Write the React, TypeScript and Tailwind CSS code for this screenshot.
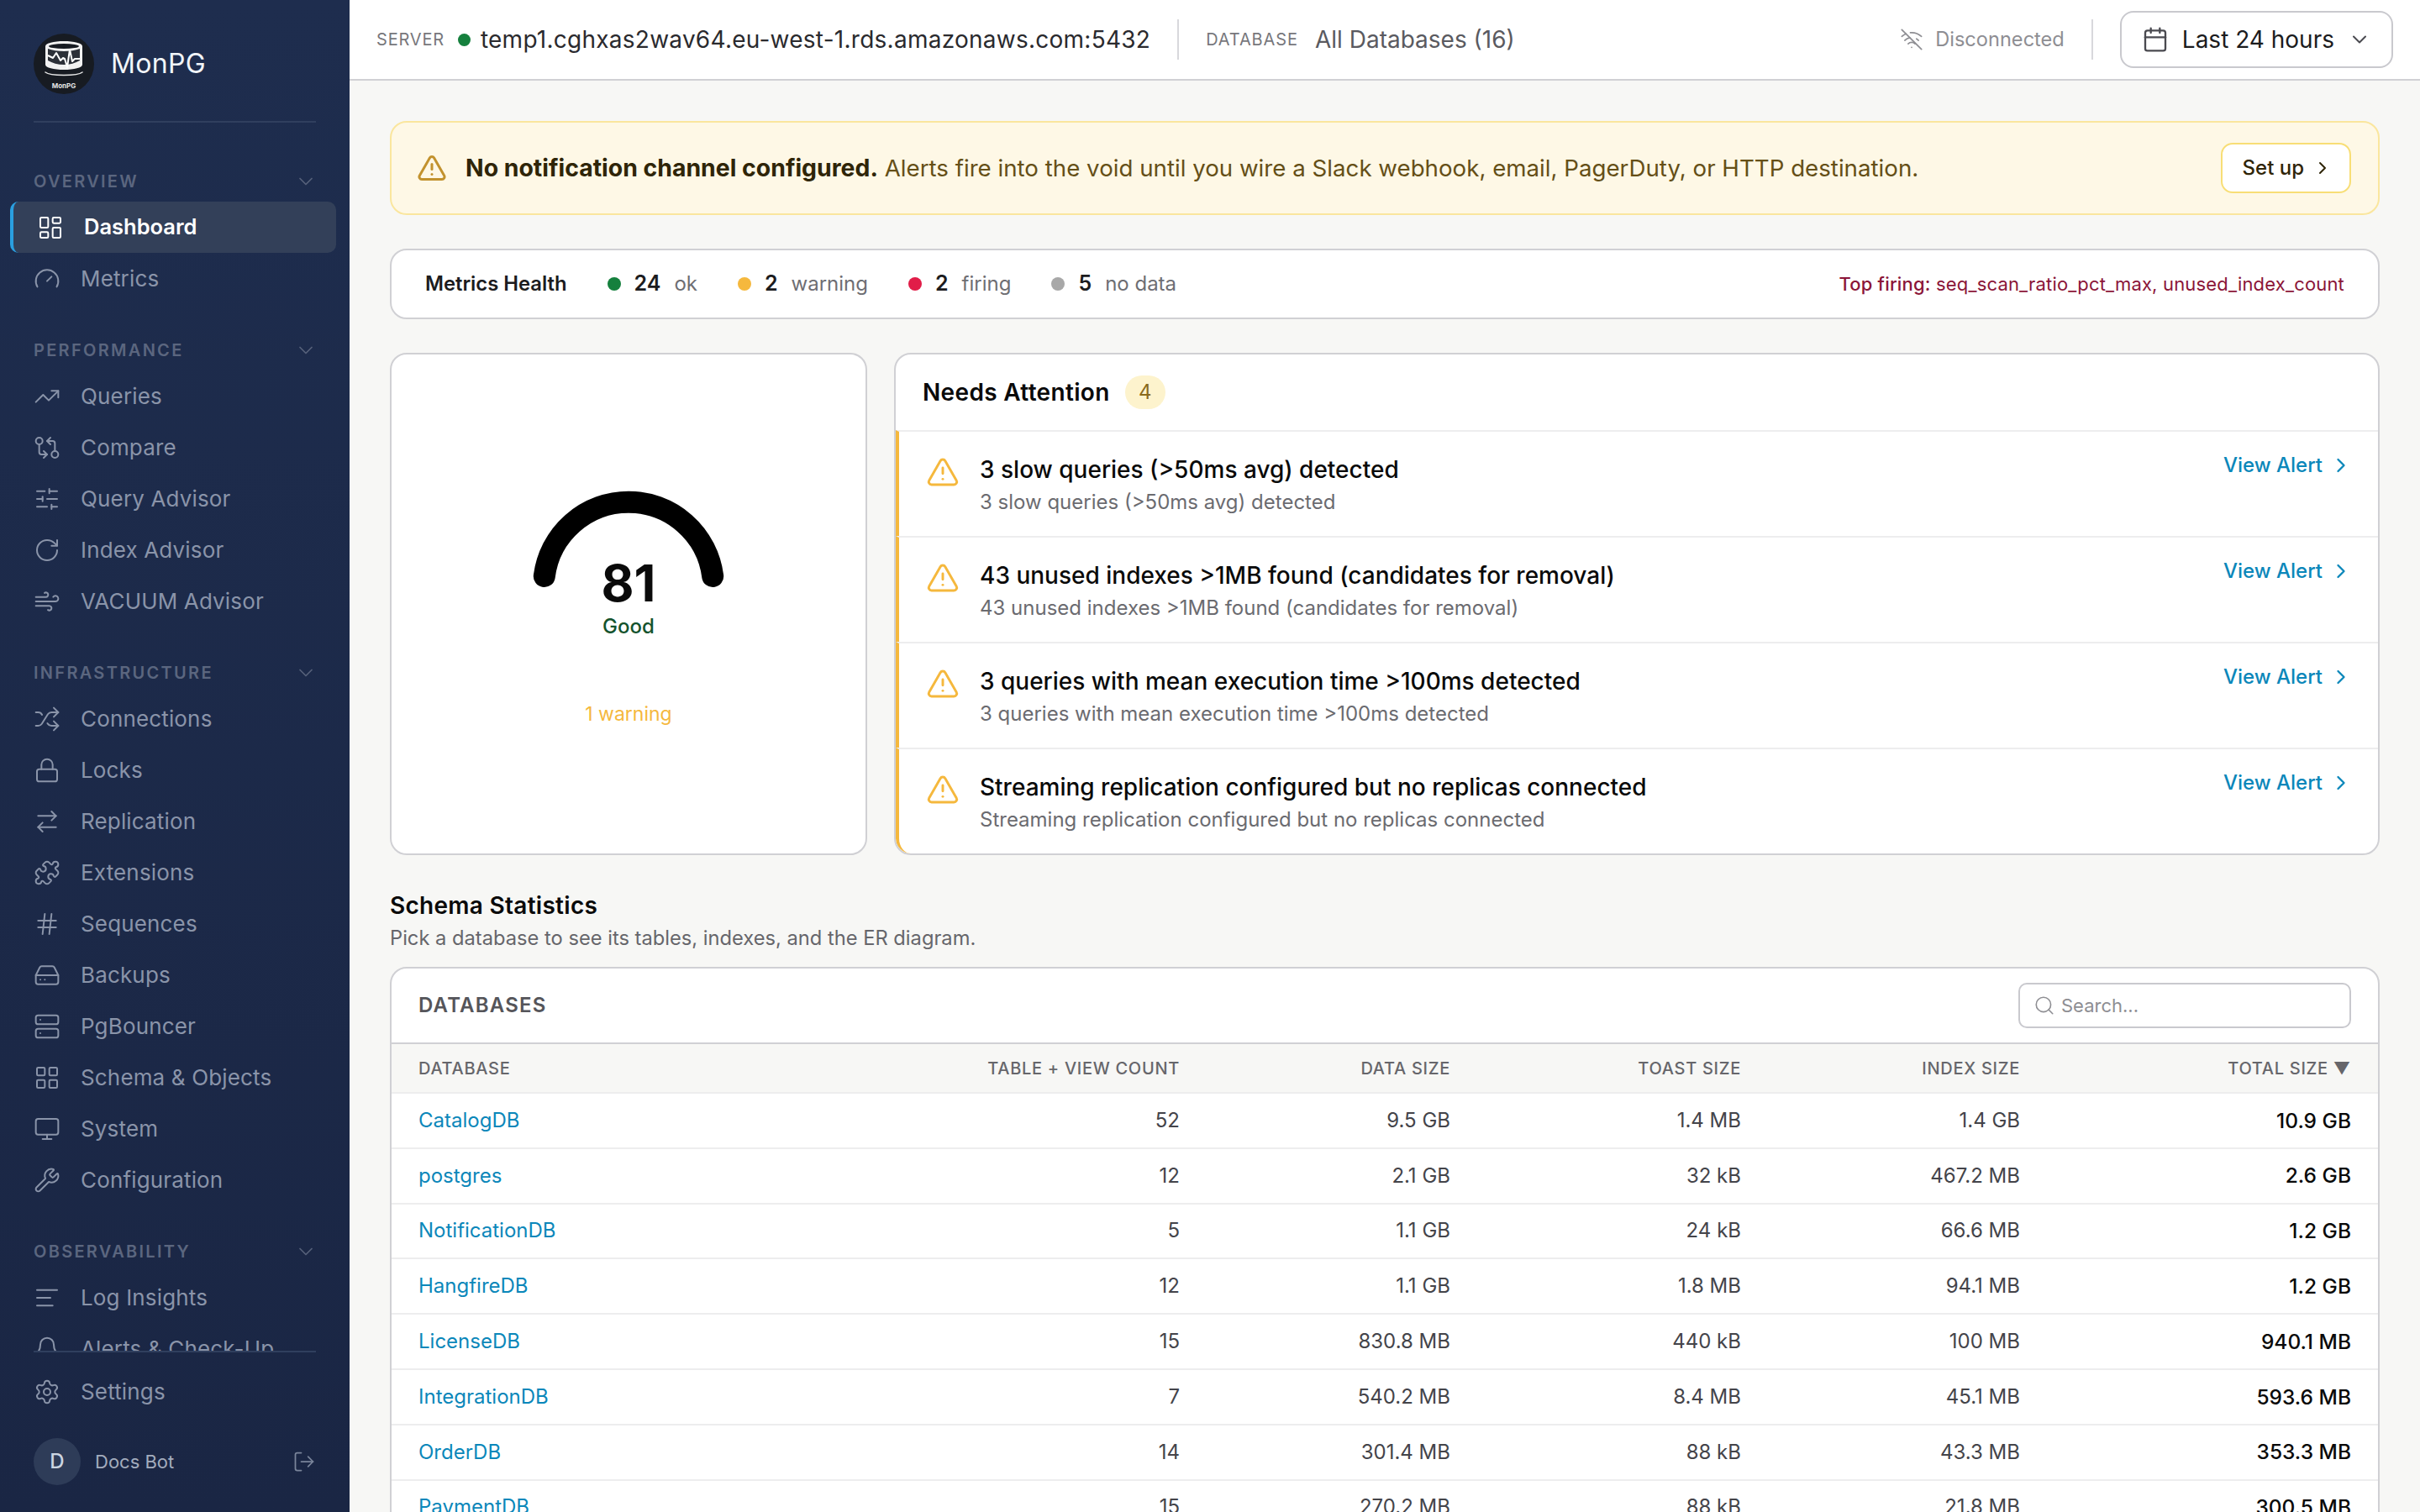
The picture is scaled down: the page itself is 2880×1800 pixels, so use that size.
import {
  AlignLeft,
  ArrowRightLeft,
  Bell,
  Calendar,
  ChevronDown,
  ChevronRight,
  Gauge,
  GitCompareArrows,
  HardDrive,
  Hash,
  LayoutDashboard,
  LayoutGrid,
  Lock,
  LogOut,
  Monitor,
  Puzzle,
  RotateCw,
  Search,
  Server,
  Settings,
  Shuffle,
  SlidersHorizontal,
  TrendingUp,
  TriangleAlert,
  Wind,
  WifiOff,
  Wrench,
} from "lucide-react";
import type { LucideIcon } from "lucide-react";

const sections: { title: string; items: { label: string; icon: LucideIcon; active?: boolean }[] }[] = [
  {
    title: "OVERVIEW",
    items: [
      { label: "Dashboard", icon: LayoutDashboard, active: true },
      { label: "Metrics", icon: Gauge },
    ],
  },
  {
    title: "PERFORMANCE",
    items: [
      { label: "Queries", icon: TrendingUp },
      { label: "Compare", icon: GitCompareArrows },
      { label: "Query Advisor", icon: SlidersHorizontal },
      { label: "Index Advisor", icon: RotateCw },
      { label: "VACUUM Advisor", icon: Wind },
    ],
  },
  {
    title: "INFRASTRUCTURE",
    items: [
      { label: "Connections", icon: Shuffle },
      { label: "Locks", icon: Lock },
      { label: "Replication", icon: ArrowRightLeft },
      { label: "Extensions", icon: Puzzle },
      { label: "Sequences", icon: Hash },
      { label: "Backups", icon: HardDrive },
      { label: "PgBouncer", icon: Server },
      { label: "Schema & Objects", icon: LayoutGrid },
      { label: "System", icon: Monitor },
      { label: "Configuration", icon: Wrench },
    ],
  },
  {
    title: "OBSERVABILITY",
    items: [
      { label: "Log Insights", icon: AlignLeft },
      { label: "Alerts & Check-Up", icon: Bell },
    ],
  },
];

const alerts = [
  "3 slow queries (>50ms avg) detected",
  "43 unused indexes >1MB found (candidates for removal)",
  "3 queries with mean execution time >100ms detected",
  "Streaming replication configured but no replicas connected",
];

const health = [
  { dot: "bg-[#15803d]", count: "24", label: "ok" },
  { dot: "bg-[#f5b83d]", count: "2", label: "warning" },
  { dot: "bg-[#e11d48]", count: "2", label: "firing" },
  { dot: "bg-[#a8a8a8]", count: "5", label: "no data" },
];

const databases = [
  ["CatalogDB", "52", "9.5 GB", "1.4 MB", "1.4 GB", "10.9 GB"],
  ["postgres", "12", "2.1 GB", "32 kB", "467.2 MB", "2.6 GB"],
  ["NotificationDB", "5", "1.1 GB", "24 kB", "66.6 MB", "1.2 GB"],
  ["HangfireDB", "12", "1.1 GB", "1.8 MB", "94.1 MB", "1.2 GB"],
  ["LicenseDB", "15", "830.8 MB", "440 kB", "100 MB", "940.1 MB"],
  ["IntegrationDB", "7", "540.2 MB", "8.4 MB", "45.1 MB", "593.6 MB"],
  ["OrderDB", "14", "301.4 MB", "88 kB", "43.3 MB", "353.3 MB"],
  ["PaymentDB", "15", "270.2 MB", "88 kB", "21.8 MB", "300.5 MB"],
];

function Logo() {
  return (
    <svg viewBox="0 0 72 72" className="h-[72px] w-[72px] shrink-0">
      <circle cx="36" cy="36" r="36" fill="#171b22" />
      <path d="M14 15c0-3.500 10-6 22-6s22 2.500 22 6v22c0 3.500-10 6-22 6s-22-2.500-22-6z" fill="#f2f2f2" />
      <path d="M17 18c5 2 12 3 19 3s14-1 19-3v14c-5 3-12 5-19 5s-14-2-19-5z" fill="#2c3038" />
      <ellipse cx="36" cy="15" rx="18" ry="3" fill="#171b22" />
      <path
        d="M17 26l6 3 4-6 5 9 3-3 2 1 3 10 3-21 3 14 3-3h6"
        fill="none"
        stroke="#ffffff"
        strokeWidth="2"
        strokeLinejoin="round"
      />
      <path d="M14 46c3 2.500 12 3.500 22 3.500s19-1 22-3.500" fill="none" stroke="#e8e8e8" strokeWidth="1.6" strokeLinecap="round" />
      <text x="36" y="65" textAnchor="middle" fontSize="8" fontWeight="700" fill="#e5e5e5" fontFamily="Inter, sans-serif">
        MonPG
      </text>
    </svg>
  );
}

function NavItem({ label, icon: Icon, active }: { label: string; icon: LucideIcon; active?: boolean }) {
  if (active) {
    return (
      <a className="mr-4 ml-3 flex h-[61px] shrink-0 items-center gap-6 rounded-[10px] border-l-4 border-[#2a9fe0] bg-[#334059] pl-7 text-[25.5px] font-semibold text-white">
        <Icon className="h-8 w-8 shrink-0" strokeWidth={1.5} />
        {label}
      </a>
    );
  }
  return (
    <a className="mr-4 ml-3 flex h-[61px] shrink-0 items-center gap-6 pl-7 text-[26px] tracking-[0.006em] text-[#8a94a9]">
      <Icon className="h-8 w-8 shrink-0" strokeWidth={1.5} />
      {label}
    </a>
  );
}

function Sidebar() {
  return (
    <aside className="flex h-screen w-[416px] shrink-0 flex-col bg-gradient-to-b from-[#1e2d4e] to-[#1a2644]">
      <div className="mx-10 flex shrink-0 items-center gap-5 border-b-2 border-[#303f5e] pt-10 pb-8">
        <Logo />
        <span className="text-[32px] leading-none tracking-[0.01em] text-[#f1f5f9]">MonPG</span>
      </div>
      <nav className="flex flex-1 flex-col gap-[31px] overflow-hidden pt-[46px]">
        {sections.map((section) => (
          <div key={section.title} className="flex shrink-0 flex-col">
            <div className="flex h-12 items-center justify-between pr-[38px] pl-10">
              <span className="text-[20px] font-semibold tracking-[0.115em] text-[#5b667f]">{section.title}</span>
              <ChevronDown className="h-7 w-7 text-[#56617a]" strokeWidth={1.5} />
            </div>
            {section.items.map((item) => (
              <NavItem key={item.label} {...item} />
            ))}
          </div>
        ))}
      </nav>
      <div className="mx-10 h-0.5 shrink-0 bg-[#303f5e]" />
      <div className="flex shrink-0 flex-col pt-4 pb-8">
        <NavItem label="Settings" icon={Settings} />
        <div className="mt-[25px] flex items-center px-10">
          <div className="flex h-14 w-14 items-center justify-center rounded-full bg-[#2e3c58] text-[24px] font-medium text-[#cbd5e1]">
            D
          </div>
          <span className="ml-[17px] flex-1 text-[22px] text-[#a3acbd]">Docs Bot</span>
          <LogOut className="h-7 w-7 text-[#7a859b]" strokeWidth={1.5} />
        </div>
      </div>
    </aside>
  );
}

function TopBar() {
  return (
    <header className="flex h-24 shrink-0 items-center justify-between border-b-2 border-[#d0d0d4] bg-white px-8">
      <div className="flex items-center">
        <span className="text-[20px] tracking-[0.04em] text-[#77777c]">SERVER</span>
        <span className="ml-4 h-[15px] w-[15px] rounded-full bg-[#15803d]" />
        <span className="ml-3 text-[28px] tracking-[0.009em] text-[#2a2a2e]">temp1.cghxas2wav64.eu-west-1.rds.amazonaws.com:5432</span>
        <span className="mx-8 h-12 w-0.5 bg-[#d8d8dc]" />
        <span className="text-[20px] tracking-[0.045em] text-[#77777c]">DATABASE</span>
        <span className="ml-5 text-[28px] text-[#5a5a60]">All Databases (16)</span>
      </div>
      <div className="flex items-center">
        <WifiOff className="h-7 w-7 text-[#8e8e93]" strokeWidth={1.5} />
        <span className="ml-[14px] text-[23.6px] text-[#8e8e93]">Disconnected</span>
        <span className="mx-8 h-12 w-0.5 bg-[#d8d8dc]" />
        <button className="flex h-[68px] items-center gap-4 rounded-2xl border-2 border-[#c9c9ce] bg-white px-6 text-[28px] text-[#1c1c1e]">
          <Calendar className="h-8 w-8 text-[#4a4a50]" strokeWidth={1.75} />
          Last 24 hours
          <ChevronDown className="h-7 w-7 text-[#4a4a50]" strokeWidth={1.75} />
        </button>
      </div>
    </header>
  );
}

function NotificationBanner() {
  return (
    <div className="flex h-28 shrink-0 items-center justify-between rounded-[20px] border-2 border-[#fae69e] bg-[#fef8e6] pr-8 pl-[30px]">
      <div className="flex items-center gap-[22px] text-[27.7px] text-[#654f17]">
        <TriangleAlert className="h-9 w-9 shrink-0 text-[#c2922e]" strokeWidth={2} />
        <p>
          <strong className="text-[28.4px] font-bold text-[#2f2508]">No notification channel configured.</strong> Alerts
          fire into the void until you wire a Slack webhook, email, PagerDuty, or HTTP destination.
        </p>
      </div>
      <button className="flex h-[60px] items-center gap-[10px] rounded-[14px] border-2 border-[#f8de76] bg-white pr-5 pl-6 text-[24px] font-medium text-[#2f2508]">
        Set up
        <ChevronRight className="h-6 w-6" strokeWidth={2} />
      </button>
    </div>
  );
}

function MetricsHealth() {
  return (
    <div className="flex h-[84px] shrink-0 items-center justify-between rounded-[20px] border-2 border-[#d0d0d4] bg-white px-10 text-[24px]">
      <div className="flex items-center gap-12">
        <span className="text-[23.8px] font-semibold text-[#1c1c1e]">Metrics Health</span>
        {health.map((h, idx) => (
          <div key={idx} className="flex items-center">
            <span className={`h-4 w-4 rounded-full ${h.dot}`} />
            <span className="ml-4 text-[25px] font-semibold text-[#1c1c1e]">{h.count}</span>
            <span className="ml-4 text-[#6e6e73]">{h.label}</span>
          </div>
        ))}
      </div>
      <p className="text-[22px] tracking-[0.008em] text-[#8b1538]">
        <span className="font-medium">Top firing:</span> seq_scan_ratio_pct_max, unused_index_count
      </p>
    </div>
  );
}

function ScoreCard() {
  return (
    <div className="flex h-[598px] w-[568px] shrink-0 flex-col items-center justify-center rounded-[20px] border-2 border-[#d0d0d4] bg-white pt-2.5">
      <div className="relative h-[188px] w-[240px]">
        <svg viewBox="0 0 240 130" className="h-[130px] w-[240px]">
          <path d="M19.800 107A101 101 0 0 1 220.200 107" fill="none" stroke="#000000" strokeWidth="26" strokeLinecap="round" />
        </svg>
        <div className="absolute inset-x-0 top-[85px] flex flex-col items-center">
          <span className="text-[60px] leading-[60px] font-bold text-[#0a0a0a]">81</span>
          <span className="mt-[3px] text-[24px] leading-[38px] font-medium text-[#14532d]">Good</span>
        </div>
      </div>
      <span className="mt-[64px] text-[23px] leading-[38px] text-[#f5b83d]">1 warning</span>
    </div>
  );
}

function AlertRow({ text }: { text: string }) {
  return (
    <div className="flex h-[126px] shrink-0 items-start border-t-2 border-l-4 border-t-[#ededee] border-l-[#f5b83d] pt-5 pr-[30px] pl-8 last:rounded-bl-[18px]">
      <TriangleAlert className="mt-2 h-10 w-10 shrink-0 text-[#f5b83d]" strokeWidth={1.75} />
      <div className="ml-6 flex flex-1 flex-col">
        <span className="mt-[3px] text-[28px] leading-[44px] font-medium text-[#0a0a0a]">{text}</span>
        <span className="text-[24px] leading-[34px] text-[#6b6b70]">{text}</span>
      </div>
      <a className="flex items-center gap-2 text-[24px] leading-[40px] font-medium text-[#0b87ba]">
        View Alert
        <ChevronRight className="h-7 w-7" strokeWidth={2} />
      </a>
    </div>
  );
}

function NeedsAttention() {
  return (
    <div className="flex h-[598px] flex-1 flex-col overflow-hidden rounded-[20px] border-2 border-[#d0d0d4] bg-white">
      <div className="flex h-[90px] shrink-0 items-center gap-[18px] pl-8">
        <h3 className="text-[28px] font-semibold tracking-[0.012em] text-[#0a0a0a]">Needs Attention</h3>
        <span className="flex h-10 w-12 items-center justify-center rounded-full bg-[#fdf3cd] text-[24px] text-[#8a6a1c]">
          4
        </span>
      </div>
      {alerts.map((text) => (
        <AlertRow key={text} text={text} />
      ))}
    </div>
  );
}

function SchemaStatistics() {
  const th = "text-right px-8 text-[20px] font-medium tracking-[0.035em] text-[#66666b]";
  const td = "text-right px-8 text-[24px] text-[#44444a]";
  return (
    <section className="flex flex-col">
      <h2 className="text-[28px] leading-[41px] font-semibold tracking-[0.01em] text-[#0a0a0a]">Schema Statistics</h2>
      <p className="text-[23.7px] leading-[36px] text-[#66666b]">Pick a database to see its tables, indexes, and the ER diagram.</p>
      <div className="mt-4 overflow-hidden rounded-t-[20px] border-2 border-[#d0d0d4] bg-white">
        <div className="flex h-[90px] items-center justify-between border-b-2 border-[#d0d0d4] px-8">
          <span className="text-[24px] font-semibold tracking-[0.05em] text-[#55555a]">DATABASES</span>
          <div className="flex h-[54px] w-[396px] items-center gap-[7px] rounded-[10px] border-2 border-[#c9c9ce] px-4 text-[22px] text-[#8e8e93]">
            <Search className="h-[26px] w-[26px] shrink-0" strokeWidth={1.5} />
            Search...
          </div>
        </div>
        <table className="w-full table-fixed border-collapse">
          <colgroup>
            <col className="w-[470px]" />
            <col className="w-[500px]" />
            <col className="w-[322px]" />
            <col className="w-[346px]" />
            <col className="w-[332px]" />
            <col className="w-[394px]" />
          </colgroup>
          <thead>
            <tr className="h-[58px] border-b-2 border-[#ededee] bg-[#f7f7f5]">
              <th className="px-8 text-left text-[20px] font-medium tracking-[0.035em] text-[#66666b]">DATABASE</th>
              <th className={th}>TABLE + VIEW COUNT</th>
              <th className={th}>DATA SIZE</th>
              <th className={th}>TOAST SIZE</th>
              <th className={th}>INDEX SIZE</th>
              <th className={th}>TOTAL SIZE ▼</th>
            </tr>
          </thead>
          <tbody>
            {databases.map((row) => (
              <tr key={row[0]} className="h-[65.8px] border-b-2 border-[#ededee]">
                <td className="px-8 text-[24px] text-[#0b87ba]">{row[0]}</td>
                <td className={td}>{row[1]}</td>
                <td className={td}>{row[2]}</td>
                <td className={td}>{row[3]}</td>
                <td className={td}>{row[4]}</td>
                <td className="px-8 text-right text-[24.5px] font-medium text-[#0a0a0a]">{row[5]}</td>
              </tr>
            ))}
          </tbody>
        </table>
      </div>
    </section>
  );
}

export default function App() {
  return (
    <div className="flex h-screen w-full overflow-hidden bg-[#f7f7f5] font-[Inter,sans-serif]">
      <Sidebar />
      <div className="flex min-w-0 flex-1 flex-col">
        <TopBar />
        <main className="flex flex-1 flex-col gap-10 overflow-hidden p-12">
          <NotificationBanner />
          <MetricsHealth />
          <div className="flex shrink-0 gap-8">
            <ScoreCard />
            <NeedsAttention />
          </div>
          <SchemaStatistics />
        </main>
      </div>
    </div>
  );
}
